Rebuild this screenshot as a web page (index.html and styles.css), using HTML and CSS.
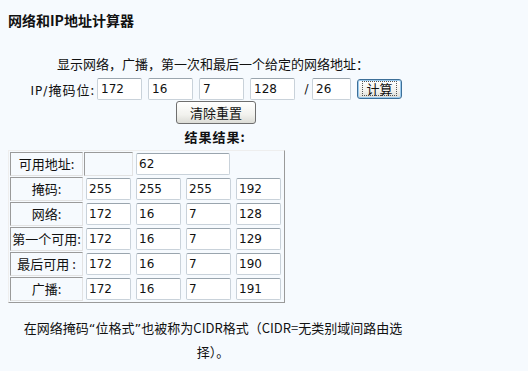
FILE: index.html
```html
<!DOCTYPE html>
<html lang="zh-CN">
<head>
<meta charset="utf-8">
<title>网络和IP地址计算器</title>
<link rel="stylesheet" href="styles.css">
</head>
<body>
<div class="page">
  <h1 class="title">网络和IP地址计算器</h1>
  <p class="intro">显示网络，广播，第一次和最后一个给定的网络地址：</p>
  <div class="ip-row">
    <span class="ip-label"><span class="latin">IP/</span>掩码位:</span>
    <input class="field oct" value="172">
    <input class="field oct" value="16">
    <input class="field oct" value="7">
    <input class="field oct" value="128">
    <span class="slash">/</span>
    <input class="field mask" value="26">
    <button class="btn btn-calc"><span class="focus">计算</span></button>
  </div>
  <div class="reset-row"><button class="btn btn-reset">清除重置</button></div>
  <div class="res-title">结果结果:</div>
  <table class="result">
    <tr>
      <td class="lbl">可用地址:</td>
      <td class="blank"></td>
      <td class="cell" colspan="3"><input class="field wide" value="62"></td>
    </tr>
    <tr>
      <td class="lbl">掩码:</td>
      <td class="cell"><input class="field num" value="255"></td>
      <td class="cell"><input class="field num" value="255"></td>
      <td class="cell"><input class="field num" value="255"></td>
      <td class="cell"><input class="field num" value="192"></td>
    </tr>
    <tr>
      <td class="lbl">网络:</td>
      <td class="cell"><input class="field num" value="172"></td>
      <td class="cell"><input class="field num" value="16"></td>
      <td class="cell"><input class="field num" value="7"></td>
      <td class="cell"><input class="field num" value="128"></td>
    </tr>
    <tr>
      <td class="lbl">第一个可用:</td>
      <td class="cell"><input class="field num" value="172"></td>
      <td class="cell"><input class="field num" value="16"></td>
      <td class="cell"><input class="field num" value="7"></td>
      <td class="cell"><input class="field num" value="129"></td>
    </tr>
    <tr>
      <td class="lbl">最后可用 :</td>
      <td class="cell"><input class="field num" value="172"></td>
      <td class="cell"><input class="field num" value="16"></td>
      <td class="cell"><input class="field num" value="7"></td>
      <td class="cell"><input class="field num" value="190"></td>
    </tr>
    <tr>
      <td class="lbl">广播:</td>
      <td class="cell"><input class="field num" value="172"></td>
      <td class="cell"><input class="field num" value="16"></td>
      <td class="cell"><input class="field num" value="7"></td>
      <td class="cell"><input class="field num" value="191"></td>
    </tr>
  </table>
  <p class="note">在网络掩码<span class="q">“</span>位格式<span class="q">”</span>也被称为CIDR格式（CIDR=无类别域间路由选择）。</p>
</div>
</body>
</html>
```

FILE: styles.css
```css
html, body {
  margin: 0;
  padding: 0;
  background: #f6fafe;
}

body {
  font-family: "Noto Sans CJK SC", sans-serif;
  font-size: 13px;
  color: #111;
}

.page {
  width: 410px;
  padding: 10px 8px;
}

.title {
  margin: 0;
  font-size: 14px;
  line-height: 20px;
  font-weight: bold;
}

.intro {
  margin: 24px 0 0;
  line-height: 20px;
  text-align: center;
}

.ip-row {
  margin-top: 3px;
  height: 24px;
  display: flex;
  align-items: center;
  padding-left: 17px;
}

.ip-label {
  width: 70px;
  margin-right: 2px;
  text-align: right;
  white-space: nowrap;
  letter-spacing: 1px;
}

.latin {
  font-family: "DejaVu Sans", sans-serif;
  font-size: 12px;
}

.field {
  box-sizing: border-box;
  height: 22px;
  margin: 0;
  padding: 0 2px;
  border: 1px solid #c9d2da;
  border-top-color: #9aa5ae;
  border-radius: 2px;
  background: #fff;
  font-family: "DejaVu Sans", sans-serif;
  font-size: 12px;
  color: #111;
  outline: none;
}

.oct {
  width: 45px;
  margin-right: 6px;
  padding-left: 3px;
}

.slash {
  width: 11px;
  font-family: "DejaVu Sans", sans-serif;
  font-size: 12px;
  text-align: center;
}

.mask {
  width: 39px;
  margin-right: 6px;
  padding-left: 3px;
}

.btn {
  box-sizing: border-box;
  margin: 0;
  padding: 0;
  font-family: "Noto Sans CJK SC", sans-serif;
  font-size: 13px;
  color: #111;
  border-radius: 3px;
  background: linear-gradient(#ffffff, #f2f2ee 60%, #dcdcd6);
}

.btn-calc {
  width: 45px;
  height: 20px;
  border: 1px solid #3d6f98;
  box-shadow: inset 0 0 0 1px #9ccbee;
  line-height: 16px;
}

.focus {
  border: 1px dotted #555;
  padding: 0 3px;
  line-height: 13px;
  display: inline-block;
}

.reset-row {
  height: 23px;
  display: flex;
  justify-content: center;
  padding-left: 6px;
}

.btn-reset {
  width: 80px;
  height: 23px;
  border: 1px solid #6f6f6f;
  line-height: 20px;
}

.res-title {
  margin-top: 3px;
  line-height: 20px;
  text-align: center;
  font-weight: bold;
  letter-spacing: 1px;
  padding-left: 4px;
}

.result {
  margin-top: 3px;
  border-collapse: separate;
  border-spacing: 1px;
  border: 1px solid;
  border-color: #eeeeee #9a9a9a #9a9a9a #eeeeee;
}

.result td {
  padding: 0;
}

.result .lbl {
  width: 71px;
  height: 22px;
  line-height: 22px;
  text-align: center;
  white-space: nowrap;
  border: 1px solid;
  border-color: #9a9a9a #e2e2e2 #e2e2e2 #9a9a9a;
}

.result .blank {
  width: 47px;
  border: 1px solid;
  border-color: #9a9a9a #e2e2e2 #e2e2e2 #9a9a9a;
}

.result .cell {
  padding: 1px 2px;
}

.num {
  width: 45px;
  display: block;
}

.wide {
  width: 94px;
  display: block;
}

.note {
  margin: 13px 0 0;
  padding: 0 10px;
  line-height: 23px;
  text-align: center;
}

.q {
  font-family: "DejaVu Sans", sans-serif;
}
```
